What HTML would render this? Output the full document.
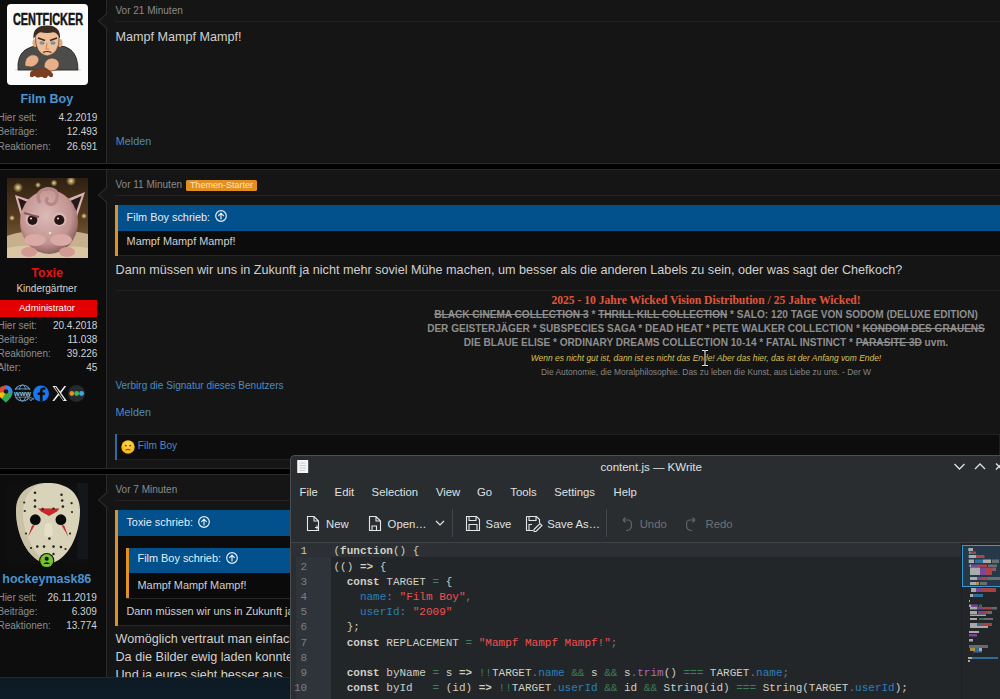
<!DOCTYPE html>
<html><head><meta charset="utf-8"><title>Forum + KWrite</title>
<style>
html,body{margin:0;padding:0;}
body{width:1000px;height:699px;overflow:hidden;position:relative;background:#000;font-family:"Liberation Sans", sans-serif;}
.t{position:absolute;white-space:nowrap;line-height:1;}
.r{position:absolute;}
s{text-decoration:line-through;}
</style></head><body>
<div class="r" style="left:0px;top:-5px;width:1000px;height:169px;background:#2a2a2a;"></div>
<div class="r" style="left:0px;top:-4px;width:106px;height:167px;background:#0d0d0d;"></div>
<div class="r" style="left:107px;top:-4px;width:893px;height:167px;background:#151515;"></div>
<svg class="r" style="left:97px;top:12px" width="12" height="18" viewBox="0 0 12 18"><path d="M10 0 L10 1.5 L1.5 9 L10 16.5 L10 18" fill="#151515" stroke="#2a2a2a" stroke-width="1.2"/><rect x="10" y="1.2" width="2" height="15.6" fill="#151515"/></svg>
<div class="r" style="left:0px;top:169px;width:1000px;height:300px;background:#2a2a2a;"></div>
<div class="r" style="left:0px;top:170px;width:106px;height:298px;background:#0d0d0d;"></div>
<div class="r" style="left:107px;top:170px;width:893px;height:298px;background:#151515;"></div>
<svg class="r" style="left:97px;top:186px" width="12" height="18" viewBox="0 0 12 18"><path d="M10 0 L10 1.5 L1.5 9 L10 16.5 L10 18" fill="#151515" stroke="#2a2a2a" stroke-width="1.2"/><rect x="10" y="1.2" width="2" height="15.6" fill="#151515"/></svg>
<div class="r" style="left:0px;top:474px;width:1000px;height:287px;background:#2a2a2a;"></div>
<div class="r" style="left:0px;top:475px;width:106px;height:285px;background:#0d0d0d;"></div>
<div class="r" style="left:107px;top:475px;width:893px;height:285px;background:#151515;"></div>
<svg class="r" style="left:97px;top:491px" width="12" height="18" viewBox="0 0 12 18"><path d="M10 0 L10 1.5 L1.5 9 L10 16.5 L10 18" fill="#151515" stroke="#2a2a2a" stroke-width="1.2"/><rect x="10" y="1.2" width="2" height="15.6" fill="#151515"/></svg>
<svg class="r" style="left:7px;top:4px" width="81" height="81" viewBox="0 0 81 81">
<rect width="81" height="81" rx="4" fill="#fcfcfc"/>
<text x="6" y="20.6" font-family="Liberation Sans" font-weight="700" font-size="16" textLength="70" lengthAdjust="spacingAndGlyphs" fill="#141414" stroke="#141414" stroke-width="0.5">CENTFICKER</text>
<path d="M8 66 H74" stroke="#d8d2c4" stroke-width="1.2"/>
<path d="M11 66 Q10 52 18 46 Q26 41 32 42 L50 42 Q58 41 64 46 Q71 52 71 66 Z" fill="#4c4c4a" stroke="#222" stroke-width="0.8"/>
<ellipse cx="28" cy="39" rx="2.5" ry="4" fill="#e3a97f"/>
<ellipse cx="53" cy="39" rx="2.5" ry="4" fill="#e3a97f"/>
<path d="M28.5 32 Q28 50 40 52 Q53 50 52 32 Q50 27 40 27 Q30 27 28.5 32 Z" fill="#efbf97" stroke="#3a2a20" stroke-width="0.6"/>
<path d="M26.5 35 Q25 21.5 40 21.5 Q54 21.5 53 35 Q51 29 47 28 Q40 30 33 28 Q29 30 26.5 35 Z" fill="#3b2b22"/>
<path d="M31 34 L38 36.5 M43 36.5 L50 34" stroke="#3a2a20" stroke-width="1.6"/>
<ellipse cx="35" cy="39" rx="2.6" ry="1.7" fill="#7e8fa2"/><ellipse cx="46" cy="39" rx="2.6" ry="1.7" fill="#7e8fa2"/>
<path d="M40 39 L39 45 L42 45" stroke="#b07050" stroke-width="0.7" fill="none"/>
<path d="M36 48.5 Q40 46.5 44.5 48.5" stroke="#5a2a1a" stroke-width="1.1" fill="none"/>
<path d="M18 62 Q17 54 24 51 Q31 50 32 56 Q30 62 24 63 Z" fill="#e8b088" stroke="#5a3a2a" stroke-width="0.6"/>
<path d="M37 63 Q37 55 45 54 Q53 55 52 62 Q50 67 43 67 Z" fill="#e8b088" stroke="#5a3a2a" stroke-width="0.6"/>
<g fill="#7a3f22"><ellipse cx="34" cy="69" rx="11" ry="4"/><circle cx="28" cy="68" r="2.6"/><circle cx="34" cy="65.5" r="2.6"/><circle cx="40" cy="68" r="2.6"/><circle cx="31" cy="71" r="2.6"/><circle cx="38" cy="71.5" r="2.6"/><circle cx="25" cy="71" r="2.2"/><circle cx="44" cy="71" r="2.2"/></g>
</svg>
<div class="t" style="top:92.92px;left:-3.20px;width:100px;text-align:center;font-size:12.5px;color:#4b93cf;font-weight:700;">Film Boy</div>
<div class="t" style="top:113.13px;left:-2.60px;font-size:10px;color:#8c8c8c;">Hier seit:</div>
<div class="t" style="top:113.13px;left:17.40px;width:80px;text-align:right;font-size:10px;color:#d2d2d2;">4.2.2019</div>
<div class="t" style="top:127.33px;left:-2.60px;font-size:10px;color:#8c8c8c;">Beiträge:</div>
<div class="t" style="top:127.33px;left:17.40px;width:80px;text-align:right;font-size:10px;color:#d2d2d2;">12.493</div>
<div class="t" style="top:141.53px;left:-2.60px;font-size:10px;color:#8c8c8c;">Reaktionen:</div>
<div class="t" style="top:141.53px;left:17.40px;width:80px;text-align:right;font-size:10px;color:#d2d2d2;">26.691</div>
<div class="t" style="top:5.94px;left:115.50px;font-size:10px;color:#8a8a8a;">Vor 21 Minuten</div>
<div class="r" style="left:115px;top:21px;width:885px;height:1px;background:#212121;"></div>
<div class="t" style="top:30.63px;left:115.50px;font-size:12.6px;color:#d0d0d0;">Mampf Mampf Mampf!</div>
<div class="t" style="top:136.46px;left:115.80px;font-size:10.8px;color:#4b8bc3;">Melden</div>
<svg class="r" style="left:7px;top:178px" width="81" height="80" viewBox="0 0 81 80">
<defs>
<linearGradient id="jbg" x1="0" y1="0" x2="0" y2="1"><stop offset="0" stop-color="#2e2012"/><stop offset="0.55" stop-color="#5c4022"/><stop offset="1" stop-color="#8a7050"/></linearGradient>
<radialGradient id="jbody" cx="0.45" cy="0.4" r="0.62"><stop offset="0" stop-color="#dcbab6"/><stop offset="0.7" stop-color="#c29492"/><stop offset="1" stop-color="#845c5a"/></radialGradient>
<radialGradient id="bok" cx="0.5" cy="0.5" r="0.5"><stop offset="0" stop-color="#f6dc90"/><stop offset="1" stop-color="#f6dc90" stop-opacity="0"/></radialGradient>
</defs>
<rect width="81" height="80" fill="url(#jbg)"/>
<circle cx="11" cy="9.5" r="5" fill="url(#bok)"/><circle cx="64" cy="3" r="5" fill="url(#bok)"/><circle cx="47" cy="5" r="3.5" fill="url(#bok)"/><circle cx="31" cy="7" r="3" fill="url(#bok)"/><circle cx="77" cy="38" r="3" fill="url(#bok)"/><circle cx="5" cy="40" r="3" fill="url(#bok)"/>
<path d="M0 58 Q20 50 40 58 Q62 50 81 56 V80 H0 Z" fill="#c8b08c"/>
<path d="M0 70 Q25 64 45 72 Q65 66 81 70 V80 H0 Z" fill="#dac6a4"/>
<path d="M8 17 L26 23 L15 42 Z" fill="#d7b0ac"/><path d="M11 20 L23 25 L16 37 Z" fill="#241818"/>
<path d="M78 14 L58 22 L69 42 Z" fill="#d7b0ac"/><path d="M74.5 18 L61 24 L68 37 Z" fill="#241818"/>
<ellipse cx="42" cy="44" rx="29" ry="32" fill="url(#jbody)"/>
<path d="M33 25 Q27 13 40 10.5 Q52 10 50 21 Q48 28 42 26 Q37 24 41 19.5" fill="none" stroke="#b58884" stroke-width="3.2"/>
<ellipse cx="25.5" cy="41.6" rx="7" ry="6.8" fill="#d9b8b4"/><circle cx="25.5" cy="42" r="4.9" fill="#251616"/><circle cx="24" cy="40.5" r="1" fill="#eee"/>
<ellipse cx="52.3" cy="41.6" rx="7.2" ry="7" fill="#d9b8b4"/><circle cx="52.3" cy="42" r="5.1" fill="#251616"/><circle cx="51" cy="40.5" r="1" fill="#eee"/>
<path d="M17 35 L32 39" stroke="#8a5a58" stroke-width="2"/>
<circle cx="43" cy="55" r="1.3" fill="#e9e0d0"/>
<ellipse cx="28" cy="62" rx="11" ry="6" fill="#d9aaa6"/><ellipse cx="54" cy="62" rx="11" ry="6" fill="#d9aaa6"/>
<ellipse cx="22" cy="74" rx="8" ry="5" fill="#d29a92"/><ellipse cx="60" cy="74" rx="8" ry="5" fill="#d29a92"/>
</svg>
<div class="t" style="top:267.32px;left:-2.80px;width:100px;text-align:center;font-size:12.5px;color:#e41414;font-weight:700;">Toxie</div>
<div class="t" style="top:283.84px;left:-3.30px;width:100px;text-align:center;font-size:10px;color:#d2d2d2;">Kindergärtner</div>
<div class="r" style="left:0px;top:300px;width:97.4px;height:17px;background:#e30000;"></div>
<div class="t" style="top:302.56px;left:-3.00px;width:100px;text-align:center;font-size:9.5px;color:#ffffff;">Administrator</div>
<div class="t" style="top:321.04px;left:-2.60px;font-size:10px;color:#8c8c8c;">Hier seit:</div>
<div class="t" style="top:321.04px;left:17.40px;width:80px;text-align:right;font-size:10px;color:#d2d2d2;">20.4.2018</div>
<div class="t" style="top:335.04px;left:-2.60px;font-size:10px;color:#8c8c8c;">Beiträge:</div>
<div class="t" style="top:335.04px;left:17.40px;width:80px;text-align:right;font-size:10px;color:#d2d2d2;">11.038</div>
<div class="t" style="top:349.04px;left:-2.60px;font-size:10px;color:#8c8c8c;">Reaktionen:</div>
<div class="t" style="top:349.04px;left:17.40px;width:80px;text-align:right;font-size:10px;color:#d2d2d2;">39.226</div>
<div class="t" style="top:363.04px;left:-2.60px;font-size:10px;color:#8c8c8c;">Alter:</div>
<div class="t" style="top:363.04px;left:17.40px;width:80px;text-align:right;font-size:10px;color:#d2d2d2;">45</div>
<svg class="r" style="left:0px;top:384px" width="90" height="19" viewBox="0 0 90 19">
<path d="M6 1.5 C1 1.5 -2 5 -2 8.5 C-2 12 2 15 6 18.5 C10 15 12.5 12 12.5 8.5 C12.5 5 10 1.5 6 1.5 Z" fill="#34a853"/>
<path d="M6 1.5 C2 1.5 -2 5 -2 8.5 L6 8.5 Z" fill="#ea4335"/>
<path d="M6 1.5 C10 1.5 12.5 5 12.5 8.5 L6 8.5 Z" fill="#4285f4"/>
<path d="M-2 8.5 C-2 11 0 13 2 14.5 L6 8.5 Z" fill="#fbbc04"/>
<circle cx="6" cy="7.5" r="2.3" fill="#1a1a1a"/>
<circle cx="22.5" cy="9" r="8" fill="none" stroke="#6e9ec4" stroke-width="1.2"/>
<ellipse cx="22.5" cy="9" rx="3.5" ry="8" fill="none" stroke="#6e9ec4" stroke-width="1"/>
<path d="M15 5 H30 M15 13 H30" stroke="#6e9ec4" stroke-width="1"/>
<rect x="13" y="5.8" width="19" height="6.6" fill="#0e0e0e"/>
<text x="22.5" y="12" font-family="Liberation Sans" font-weight="700" font-size="7.6" textLength="17" lengthAdjust="spacingAndGlyphs" fill="#8cbde0" text-anchor="middle">www</text>
<path d="M27 12 l4 5 l1 -2 l2 0 z" fill="#0e0e0e" stroke="#7aa0c0" stroke-width="0.8"/>
<circle cx="41" cy="9.5" r="8" fill="#1877f2"/>
<path d="M42.6 17.5 V11 H44.8 L45.2 8.5 H42.6 V7 C42.6 6.2 43 5.8 43.9 5.8 H45.3 V3.6 C44.8 3.5 44 3.4 43.3 3.4 C41.2 3.4 39.9 4.7 39.9 6.9 V8.5 H37.7 V11 H39.9 V17.5 Z" fill="#0e0e0e"/>
<path d="M52.5 2 L58 9.5 L52.3 17 H54.2 L59 10.9 L63.3 17 H67 L61.1 9 L66.3 2 H64.4 L60.2 7.6 L56.2 2 Z" fill="#eeeeee"/>
<path d="M55 3 L63.8 16" stroke="#0e0e0e" stroke-width="1.2"/>
<circle cx="76.5" cy="9.5" r="8.5" fill="#262a2e"/>
<circle cx="71.8" cy="9.5" r="2.4" fill="#f0892a"/><circle cx="76.7" cy="9.5" r="2.4" fill="#33c24a"/><circle cx="81.6" cy="9.5" r="2.4" fill="#3aa9e8"/>

</svg>
<div class="t" style="top:180.34px;left:115.50px;font-size:10px;color:#8a8a8a;">Vor 11 Minuten</div>
<div class="r" style="left:186px;top:180px;width:70.8px;height:11px;background:#e28f1e;border-radius:1.5px;"></div>
<div class="t" style="top:180.88px;left:171.40px;width:100px;text-align:center;font-size:9px;color:#fbe6bd;">Themen-Starter</div>
<div class="r" style="left:115px;top:195px;width:885px;height:1px;background:#212121;"></div>
<div class="r" style="left:115px;top:204.7px;width:885px;height:51.6px;background:#0c0c0c;border-bottom:1px solid #262626;box-sizing:border-box;"></div>
<div class="r" style="left:118px;top:204.7px;width:882px;height:26.1px;background:#02508c;"></div>
<div class="r" style="left:115px;top:204.7px;width:3px;height:51.3px;background:#df9026;"></div>
<div class="t" style="top:211.67px;left:126.60px;font-size:10.9px;color:#e6eef6;">Film Boy schrieb:</div>
<svg class="r" style="left:213.9px;top:209.4px" width="14" height="14" viewBox="0 0 14 14"><circle cx="7" cy="7" r="5.3" fill="none" stroke="#e8eef5" stroke-width="1.2"/><path d="M7 10 V4.3 M4.6 6.6 L7 4.2 L9.4 6.6" fill="none" stroke="#e8eef5" stroke-width="1.2" stroke-linecap="round" stroke-linejoin="round"/></svg>
<div class="t" style="top:236.27px;left:126.60px;font-size:10.9px;color:#d0d0d0;">Mampf Mampf Mampf!</div>
<div class="t" style="top:264.10px;left:115.60px;font-size:12.64px;color:#d0d0d0;">Dann müssen wir uns in Zukunft ja nicht mehr soviel Mühe machen, um besser als die anderen Labels zu sein, oder was sagt der Chefkoch?</div>
<div class="r" style="left:116px;top:290px;width:884px;height:1px;background:#212121;"></div>
<div class="t" style="top:295.09px;left:106.00px;width:1200px;text-align:center;font-size:11.6px;color:#e2553a;font-weight:700;font-family:'Liberation Serif', serif;">2025 - 10 Jahre Wicked Vision Distribution / 25 Jahre Wicked!</div>
<div class="t" style="top:309.85px;left:106.00px;width:1200px;text-align:center;font-size:10.1px;color:#8e8e8e;font-weight:700;"><s>BLACK CINEMA COLLECTION 3</s> * <s>THRILL KILL COLLECTION</s> * SALO: 120 TAGE VON SODOM (DELUXE EDITION)</div>
<div class="t" style="top:323.99px;left:106.00px;width:1200px;text-align:center;font-size:10.05px;color:#8e8e8e;font-weight:700;">DER GEISTERJÄGER * SUBSPECIES SAGA * DEAD HEAT * PETE WALKER COLLECTION * <s>KONDOM DES GRAUENS</s></div>
<div class="t" style="top:338.35px;left:106.00px;width:1200px;text-align:center;font-size:10.1px;color:#8e8e8e;font-weight:700;">DIE BLAUE ELISE * ORDINARY DREAMS COLLECTION 10-14 * FATAL INSTINCT * <s>PARASITE 3D</s> uvm.</div>
<div class="t" style="top:353.86px;left:106.00px;width:1200px;text-align:center;font-size:8.44px;color:#d9c25a;font-style:italic;">Wenn es nicht gut ist, dann ist es nicht das Ende! Aber das hier, das ist der Anfang vom Ende!</div>
<div class="t" style="top:368.36px;left:106.00px;width:1200px;text-align:center;font-size:8.44px;color:#858585;">Die Autonomie, die Moralphilosophie. Das zu leben die Kunst, aus Liebe zu uns. - Der W</div>
<svg class="r" style="left:700px;top:349px" width="10" height="18" viewBox="0 0 10 18"><path d="M2 1.5 H4 Q5 1.5 5 3 V15 Q5 16.5 4 16.5 H2 M8 1.5 H6 Q5 1.5 5 3 V15 Q5 16.5 6 16.5 H8" fill="none" stroke="#000" stroke-width="2.6"/><path d="M2 1.5 H4 Q5 1.5 5 3 V15 Q5 16.5 4 16.5 H2 M8 1.5 H6 Q5 1.5 5 3 V15 Q5 16.5 6 16.5 H8" fill="none" stroke="#eee" stroke-width="1.1"/></svg>
<div class="t" style="top:381.29px;left:115.40px;font-size:10.05px;color:#4b8bc3;">Verbirg die Signatur dieses Benutzers</div>
<div class="t" style="top:406.96px;left:115.60px;font-size:10.8px;color:#4b8bc3;">Melden</div>
<div class="r" style="left:115px;top:434.3px;width:885px;height:26px;background:#0d0d0d;border:1px solid #202020;box-sizing:border-box;"></div>
<div class="r" style="left:115px;top:434.3px;width:2px;height:26px;background:#336a9c;"></div>
<svg class="r" style="left:121px;top:440px" width="14" height="14" viewBox="0 0 14 14"><defs><radialGradient id="emo" cx="0.5" cy="0.35" r="0.65"><stop offset="0" stop-color="#ffd84a"/><stop offset="1" stop-color="#f5b012"/></radialGradient></defs><circle cx="7" cy="7" r="6.7" fill="url(#emo)"/><circle cx="4.8" cy="5.6" r="0.9" fill="#5a3a10"/><circle cx="9.2" cy="5.6" r="0.9" fill="#5a3a10"/><path d="M4.6 10 Q7 8.6 9.4 10" fill="none" stroke="#5a3a10" stroke-width="0.9"/></svg>
<div class="t" style="top:441.25px;left:137.80px;font-size:10.1px;color:#4b8bc3;">Film Boy</div>
<svg class="r" style="left:7px;top:483px" width="81" height="82" viewBox="0 0 81 82">
<rect width="81" height="81" fill="#0f0f0f"/>
<rect x="70.5" y="0" width="10.5" height="76" fill="#13161a"/>
<path d="M41 0 C58 0 73 8 73 28 C73 50 62 78 41 81 C20 78 9 50 9 28 C9 8 24 0 41 0 Z" fill="#d9d3b9"/>
<path d="M9 28 C9 50 20 78 41 81 C28 72 16 52 16 30 C16 14 24 4 34 1 C20 3 9 10 9 28 Z" fill="#bcb598" opacity="0.55"/>
<path d="M31 25.5 H52.5 L50 28.5 L42 33 L34 28.5 Z" fill="#c8282a"/>
<circle cx="28.3" cy="36.7" r="5.4" fill="#0b0b0b"/><circle cx="53.9" cy="36.7" r="5.4" fill="#0b0b0b"/>
<path d="M27.8 42 L25 42.5 L21 54 Z" fill="#c8282a"/><path d="M54.4 42 L57.2 42.5 L61.5 54 Z" fill="#c8282a"/>
<g fill="#2a2520">
<circle cx="28" cy="9.7" r="1.3"/><circle cx="54.5" cy="11.7" r="1.3"/><circle cx="28" cy="17.5" r="1.3"/><circle cx="55.2" cy="17.5" r="1.3"/><circle cx="28" cy="23.6" r="1.3"/><circle cx="55.9" cy="23.6" r="1.3"/><circle cx="35.7" cy="26" r="1.2"/><circle cx="46.5" cy="25.6" r="1.2"/>
<circle cx="17.2" cy="19.5" r="1.1"/><circle cx="64.6" cy="20.2" r="1.1"/><circle cx="17.8" cy="28" r="1.1"/><circle cx="65" cy="29" r="1.1"/>
<circle cx="19" cy="50.5" r="1.1"/><circle cx="63" cy="50.5" r="1.1"/><circle cx="42.4" cy="55.6" r="1.3"/>
<circle cx="30.3" cy="63.6" r="1.3"/><circle cx="37" cy="63.6" r="1.3"/><circle cx="46.5" cy="63.6" r="1.3"/><circle cx="53.9" cy="64" r="1.3"/>
<circle cx="24" cy="65" r="1.1"/><circle cx="58.5" cy="66" r="1.1"/><circle cx="46.5" cy="71" r="1.2"/>
</g>
<path d="M38 42 Q41.5 38 45 42 L46 52 Q41.5 56 37 52 Z" fill="#e8e2cc" opacity="0.8"/>
</svg>
<svg class="r" style="left:39px;top:552.5px" width="16" height="16" viewBox="0 0 16 16"><circle cx="7.7" cy="7.6" r="7.6" fill="#111"/><circle cx="7.7" cy="7.6" r="6.5" fill="#74c22e"/><circle cx="7.7" cy="5.7" r="2" fill="#111"/><path d="M4.2 11 Q7.7 7.4 11.2 11 Z" fill="#111"/></svg>
<div class="t" style="top:572.62px;left:-8.20px;width:110px;text-align:center;font-size:12.5px;color:#4b93cf;font-weight:700;">hockeymask86</div>
<div class="t" style="top:592.93px;left:-2.60px;font-size:10px;color:#8c8c8c;">Hier seit:</div>
<div class="t" style="top:592.93px;left:16.80px;width:80px;text-align:right;font-size:10px;color:#d2d2d2;">26.11.2019</div>
<div class="t" style="top:606.73px;left:-2.60px;font-size:10px;color:#8c8c8c;">Beiträge:</div>
<div class="t" style="top:606.73px;left:16.80px;width:80px;text-align:right;font-size:10px;color:#d2d2d2;">6.309</div>
<div class="t" style="top:620.53px;left:-2.60px;font-size:10px;color:#8c8c8c;">Reaktionen:</div>
<div class="t" style="top:620.53px;left:16.80px;width:80px;text-align:right;font-size:10px;color:#d2d2d2;">13.774</div>
<div class="t" style="top:485.34px;left:115.50px;font-size:10px;color:#8a8a8a;">Vor 7 Minuten</div>
<div class="r" style="left:115px;top:500px;width:885px;height:1px;background:#212121;"></div>
<div class="r" style="left:115px;top:510px;width:885px;height:116px;background:#0c0c0c;border-bottom:1px solid #262626;box-sizing:border-box;"></div>
<div class="r" style="left:118px;top:510px;width:882px;height:26px;background:#02508c;"></div>
<div class="r" style="left:115px;top:510px;width:3px;height:115.8px;background:#df9026;"></div>
<div class="t" style="top:516.57px;left:126.40px;font-size:10.9px;color:#e6eef6;">Toxie schrieb:</div>
<svg class="r" style="left:197.2px;top:514.7px" width="14" height="14" viewBox="0 0 14 14"><circle cx="7" cy="7" r="5.3" fill="none" stroke="#e8eef5" stroke-width="1.2"/><path d="M7 10 V4.3 M4.6 6.6 L7 4.2 L9.4 6.6" fill="none" stroke="#e8eef5" stroke-width="1.2" stroke-linecap="round" stroke-linejoin="round"/></svg>
<div class="r" style="left:126px;top:547.5px;width:874px;height:51.1px;background:#0a0a0a;border-bottom:1px solid #262626;box-sizing:border-box;"></div>
<div class="r" style="left:129px;top:547.5px;width:871px;height:25px;background:#02508c;"></div>
<div class="r" style="left:126px;top:547.5px;width:3px;height:50.6px;background:#df9026;"></div>
<div class="t" style="top:553.37px;left:137.50px;font-size:10.9px;color:#e6eef6;">Film Boy schrieb:</div>
<svg class="r" style="left:224.8px;top:551.2px" width="14" height="14" viewBox="0 0 14 14"><circle cx="7" cy="7" r="5.3" fill="none" stroke="#e8eef5" stroke-width="1.2"/><path d="M7 10 V4.3 M4.6 6.6 L7 4.2 L9.4 6.6" fill="none" stroke="#e8eef5" stroke-width="1.2" stroke-linecap="round" stroke-linejoin="round"/></svg>
<div class="t" style="top:579.87px;left:137.50px;font-size:10.9px;color:#d0d0d0;">Mampf Mampf Mampf!</div>
<div class="t" style="top:605.77px;left:126.40px;font-size:10.9px;color:#d0d0d0;">Dann müssen wir uns in Zukunft ja nicht mehr soviel Mühe machen</div>
<div class="t" style="top:633.40px;left:115.50px;font-size:12.64px;color:#d0d0d0;">Womöglich vertraut man einfach dem Code</div>
<div class="t" style="top:651.40px;left:115.50px;font-size:12.64px;color:#d0d0d0;">Da die Bilder ewig laden konnten</div>
<div class="t" style="top:669.40px;left:115.50px;font-size:12.64px;color:#d0d0d0;">Und ja eures sieht besser aus.</div>
<div class="r" style="left:0;top:677px;width:1000px;height:22px;background:linear-gradient(180deg,#0b1a23,#0e1c27);border-top:1px solid #29272f;box-sizing:border-box;"></div>
<div class="r" style="left:290px;top:455px;width:720px;height:260px;background:#2a2d2f;border-top-left-radius:5px;border-left:1px solid #4b4e51;border-top:1px solid #4b4e51;box-sizing:border-box;"></div>
<svg class="r" style="left:297px;top:460px" width="12" height="14" viewBox="0 0 12 14"><rect x="0.2" y="0" width="11" height="13" fill="#f4f4f4"/><path d="M2.5 3 H8.5 M2.5 5.5 H9 M2.5 8 H9 M2.5 10.5 H8" stroke="#c4c4c4" stroke-width="0.8"/></svg>
<div class="t" style="top:462.07px;left:551.20px;width:200px;text-align:center;font-size:11.5px;color:#dfe1e3;">content.js — KWrite</div>
<svg class="r" style="left:950px;top:459px" width="50" height="14" viewBox="0 0 50 14"><path d="M4.5 5 L9.5 10 L14.5 5" fill="none" stroke="#dfe1e3" stroke-width="1.3"/><path d="M25 10 L30 5 L35 10" fill="none" stroke="#dfe1e3" stroke-width="1.3"/><path d="M46 4.5 L52 10.5 M52 4.5 L46 10.5" fill="none" stroke="#dfe1e3" stroke-width="1.3"/></svg>
<div class="t" style="top:486.83px;left:299.60px;font-size:11.3px;color:#dfe1e3;">File</div>
<div class="t" style="top:486.83px;left:334.60px;font-size:11.3px;color:#dfe1e3;">Edit</div>
<div class="t" style="top:486.83px;left:371.60px;font-size:11.3px;color:#dfe1e3;">Selection</div>
<div class="t" style="top:486.83px;left:436.00px;font-size:11.3px;color:#dfe1e3;">View</div>
<div class="t" style="top:486.83px;left:477.00px;font-size:11.3px;color:#dfe1e3;">Go</div>
<div class="t" style="top:486.83px;left:510.30px;font-size:11.3px;color:#dfe1e3;">Tools</div>
<div class="t" style="top:486.83px;left:554.20px;font-size:11.3px;color:#dfe1e3;">Settings</div>
<div class="t" style="top:486.83px;left:613.60px;font-size:11.3px;color:#dfe1e3;">Help</div>
<div class="t" style="top:519.23px;left:326.00px;font-size:11.3px;color:#dfe1e3;">New</div>
<div class="t" style="top:519.23px;left:387.60px;font-size:11.3px;color:#dfe1e3;">Open…</div>
<div class="t" style="top:519.23px;left:485.60px;font-size:11.3px;color:#dfe1e3;">Save</div>
<div class="t" style="top:519.23px;left:547.20px;font-size:11.3px;color:#dfe1e3;">Save As…</div>
<div class="t" style="top:519.23px;left:639.70px;font-size:11.3px;color:#6f7276;">Undo</div>
<div class="t" style="top:519.23px;left:705.50px;font-size:11.3px;color:#6f7276;">Redo</div>
<svg class="r" style="left:300px;top:508px" width="450" height="32" viewBox="0 0 450 32">
<g fill="none" stroke="#e4e6e8" stroke-width="1.1">
<path d="M7.5 8.5 H14 L18.5 13 V22.5 H7.5 Z M14 8.5 V13 H18.5"/>
<path d="M15 19.5 H19 M17 17.5 V21.5"/>
<path d="M69.5 8.5 H76 L80.5 13 V22.5 H69.5 Z M76 8.5 V13 H80.5"/>
<path d="M72 18 H76.5 V22.5 H72 Z"/>
<path d="M136 13 L140 17 L144 13" stroke-width="1.2"/>
<path d="M166.5 8.5 H176.5 L179.5 11.5 V22.5 H166.5 Z M169 8.5 V12.5 H176 V8.5 M169 22.5 V16.5 H177 V22.5"/>
<path d="M226.5 8.5 H236.5 L239.5 11.5 V15 M226.5 8.5 V22.5 H233 M229 8.5 V12.5 H236 V8.5 M229 22.5 V16.5 H232"/>
<path d="M234 21.5 L240 15.5 L242 17.5 L236 23.5 H234 Z"/>
</g>
<g fill="none" stroke="#62666a" stroke-width="1.1">
<path d="M323 12 H328 Q331.5 12 331.5 17 Q331.5 22.5 326 22.5 M323 12 L325.5 9.5 M323 12 L325.5 14.5"/>
<path d="M395 12 H390 Q386.5 12 386.5 17 Q386.5 22.5 392 22.5 M395 12 L392.5 9.5 M395 12 L392.5 14.5"/>
</g>
<path d="M152.5 1 V29 M306.5 1 V29" stroke="#44474b" stroke-width="1"/>
</svg>
<div class="r" style="left:291px;top:541.8px;width:709px;height:1px;background:#3f4246;"></div>
<div class="r" style="left:291px;top:543px;width:709px;height:156px;background:#232629;"></div>
<div class="r" style="left:291px;top:543px;width:40px;height:156px;background:#2b2e31;"></div>
<div class="r" style="left:296px;top:556.5px;width:35px;height:143px;background:#2f343a;"></div>
<div class="r" style="left:291px;top:543px;width:671px;height:13.5px;background:#2c2f33;"></div>
<div class="t" style="top:546.37px;left:277.20px;width:30px;text-align:right;font-size:11px;color:#c4c6c8;font-family:'Liberation Mono', monospace;">1</div>
<div class="t" style="top:561.57px;left:277.20px;width:30px;text-align:right;font-size:11px;color:#7b7f84;font-family:'Liberation Mono', monospace;">2</div>
<div class="t" style="top:576.77px;left:277.20px;width:30px;text-align:right;font-size:11px;color:#7b7f84;font-family:'Liberation Mono', monospace;">3</div>
<div class="t" style="top:591.97px;left:277.20px;width:30px;text-align:right;font-size:11px;color:#7b7f84;font-family:'Liberation Mono', monospace;">4</div>
<div class="t" style="top:607.17px;left:277.20px;width:30px;text-align:right;font-size:11px;color:#7b7f84;font-family:'Liberation Mono', monospace;">5</div>
<div class="t" style="top:622.37px;left:277.20px;width:30px;text-align:right;font-size:11px;color:#7b7f84;font-family:'Liberation Mono', monospace;">6</div>
<div class="t" style="top:637.57px;left:277.20px;width:30px;text-align:right;font-size:11px;color:#7b7f84;font-family:'Liberation Mono', monospace;">7</div>
<div class="t" style="top:652.77px;left:277.20px;width:30px;text-align:right;font-size:11px;color:#7b7f84;font-family:'Liberation Mono', monospace;">8</div>
<div class="t" style="top:667.97px;left:277.20px;width:30px;text-align:right;font-size:11px;color:#7b7f84;font-family:'Liberation Mono', monospace;">9</div>
<div class="t" style="top:683.17px;left:277.20px;width:30px;text-align:right;font-size:11px;color:#7b7f84;font-family:'Liberation Mono', monospace;">10</div>
<div class="t" style="top:546.37px;left:333.50px;font-size:11px;color:#cfcfc2;font-family:'Liberation Mono', monospace;white-space:pre;"><span style="color:#cfcfc2;">(</span><span style="color:#cfcfc2;font-weight:700;">function</span><span style="color:#cfcfc2;">() {</span></div>
<div class="t" style="top:561.57px;left:333.50px;font-size:11px;color:#cfcfc2;font-family:'Liberation Mono', monospace;white-space:pre;"><span style="color:#cfcfc2;">(() </span><span style="color:#cfcfc2;font-weight:700;">=&gt;</span><span style="color:#cfcfc2;"> {</span></div>
<div class="t" style="top:576.77px;left:333.50px;font-size:11px;color:#cfcfc2;font-family:'Liberation Mono', monospace;white-space:pre;"><span style="color:#cfcfc2;">  </span><span style="color:#cfcfc2;font-weight:700;">const</span><span style="color:#cfcfc2;"> TARGET </span><span style="color:#3f8058;">=</span><span style="color:#cfcfc2;"> {</span></div>
<div class="t" style="top:591.97px;left:333.50px;font-size:11px;color:#cfcfc2;font-family:'Liberation Mono', monospace;white-space:pre;"><span style="color:#cfcfc2;">    </span><span style="color:#2980b9;">name</span><span style="color:#7a7c7d;">:</span><span style="color:#cfcfc2;"> </span><span style="color:#f44f4f;">"Film Boy"</span><span style="color:#7a7c7d;">,</span></div>
<div class="t" style="top:607.17px;left:333.50px;font-size:11px;color:#cfcfc2;font-family:'Liberation Mono', monospace;white-space:pre;"><span style="color:#cfcfc2;">    </span><span style="color:#2980b9;">userId</span><span style="color:#7a7c7d;">:</span><span style="color:#cfcfc2;"> </span><span style="color:#f44f4f;">"2009"</span></div>
<div class="t" style="top:622.37px;left:333.50px;font-size:11px;color:#cfcfc2;font-family:'Liberation Mono', monospace;white-space:pre;"><span style="color:#cfcfc2;">  };</span></div>
<div class="t" style="top:637.57px;left:333.50px;font-size:11px;color:#cfcfc2;font-family:'Liberation Mono', monospace;white-space:pre;"><span style="color:#cfcfc2;">  </span><span style="color:#cfcfc2;font-weight:700;">const</span><span style="color:#cfcfc2;"> REPLACEMENT </span><span style="color:#3f8058;">=</span><span style="color:#cfcfc2;"> </span><span style="color:#f44f4f;">"Mampf Mampf Mampf!"</span><span style="color:#7a7c7d;">;</span></div>
<div class="t" style="top:667.97px;left:333.50px;font-size:11px;color:#cfcfc2;font-family:'Liberation Mono', monospace;white-space:pre;"><span style="color:#cfcfc2;">  </span><span style="color:#cfcfc2;font-weight:700;">const</span><span style="color:#cfcfc2;"> byName </span><span style="color:#3f8058;">=</span><span style="color:#cfcfc2;"> s </span><span style="color:#cfcfc2;font-weight:700;">=&gt;</span><span style="color:#cfcfc2;"> </span><span style="color:#3f8058;">!!</span><span style="color:#cfcfc2;">TARGET</span><span style="color:#7a7c7d;">.</span><span style="color:#2980b9;">name</span><span style="color:#cfcfc2;"> </span><span style="color:#3f8058;">&amp;&amp;</span><span style="color:#cfcfc2;"> s </span><span style="color:#3f8058;">&amp;&amp;</span><span style="color:#cfcfc2;"> s</span><span style="color:#7a7c7d;">.</span><span style="color:#a36ac7;">trim</span><span style="color:#cfcfc2;">() </span><span style="color:#3f8058;">===</span><span style="color:#cfcfc2;"> TARGET</span><span style="color:#7a7c7d;">.</span><span style="color:#2980b9;">name</span><span style="color:#7a7c7d;">;</span></div>
<div class="t" style="top:683.17px;left:333.50px;font-size:11px;color:#cfcfc2;font-family:'Liberation Mono', monospace;white-space:pre;"><span style="color:#cfcfc2;">  </span><span style="color:#cfcfc2;font-weight:700;">const</span><span style="color:#cfcfc2;"> byId   </span><span style="color:#3f8058;">=</span><span style="color:#cfcfc2;"> (id) </span><span style="color:#cfcfc2;font-weight:700;">=&gt;</span><span style="color:#cfcfc2;"> </span><span style="color:#3f8058;">!!</span><span style="color:#cfcfc2;">TARGET</span><span style="color:#7a7c7d;">.</span><span style="color:#2980b9;">userId</span><span style="color:#cfcfc2;"> </span><span style="color:#3f8058;">&amp;&amp;</span><span style="color:#cfcfc2;"> id </span><span style="color:#3f8058;">&amp;&amp;</span><span style="color:#cfcfc2;"> String(id) </span><span style="color:#3f8058;">===</span><span style="color:#cfcfc2;"> String(TARGET</span><span style="color:#7a7c7d;">.</span><span style="color:#2980b9;">userId</span><span style="color:#cfcfc2;">);</span></div>
<div class="r" style="left:961px;top:543px;width:39px;height:156px;background:#232629;border-left:1px solid #1d1f22;"></div>
<div class="r" style="left:962px;top:545px;width:40px;height:42px;background:#26394a;border:1px solid #3c97cc;box-sizing:border-box;"></div>
<svg class="r" style="left:962px;top:540px" width="38" height="130" viewBox="962 540 38 130"><rect x="968.3" y="548" width="4.7" height="3.0" fill="#c9cbc4" opacity="0.8"/><rect x="969.2" y="551.5" width="1.3" height="2.5" fill="#c9cbc4" opacity="0.8"/><rect x="970.5" y="551.5" width="1.5" height="2.5" fill="#2f7fb3" opacity="0.8"/><rect x="972" y="551.5" width="4.0" height="2.5" fill="#c94a48" opacity="0.8"/><rect x="968.7" y="555" width="7.3" height="3.0" fill="#c9cbc4" opacity="0.8"/><rect x="976" y="555" width="8.5" height="3.0" fill="#c94a48" opacity="0.8"/><rect x="968.7" y="559.5" width="5.3" height="3.5" fill="#c9cbc4" opacity="0.8"/><rect x="975" y="559.5" width="8.0" height="3.5" fill="#2f7fb3" opacity="0.8"/><rect x="983" y="559.5" width="8.0" height="3.5" fill="#c9cbc4" opacity="0.8"/><rect x="992" y="559.5" width="7.0" height="3.5" fill="#7a7c7d" opacity="0.8"/><rect x="969.5" y="564.5" width="1.5" height="2.5" fill="#c9cbc4" opacity="0.8"/><rect x="971" y="564.5" width="7.0" height="2.5" fill="#8a4fb0" opacity="0.8"/><rect x="978" y="564.5" width="9.0" height="2.5" fill="#c94a48" opacity="0.8"/><rect x="988" y="564.5" width="9.0" height="2.5" fill="#7a7c7d" opacity="0.8"/><rect x="970" y="567.5" width="10.0" height="3.5" fill="#c9cbc4" opacity="0.8"/><rect x="980" y="567.5" width="5.0" height="3.5" fill="#8a4fb0" opacity="0.8"/><rect x="985" y="567.5" width="8.0" height="3.5" fill="#c94a48" opacity="0.8"/><rect x="993" y="567.5" width="3.0" height="3.5" fill="#7a7c7d" opacity="0.8"/><rect x="970" y="571" width="10.0" height="4.0" fill="#c9cbc4" opacity="0.8"/><rect x="980" y="571" width="6.0" height="4.0" fill="#8a4fb0" opacity="0.8"/><rect x="986" y="571" width="6.0" height="4.0" fill="#c94a48" opacity="0.8"/><rect x="970" y="577" width="7.0" height="3.0" fill="#c9cbc4" opacity="0.8"/><rect x="977" y="577" width="5.0" height="3.0" fill="#8a4fb0" opacity="0.8"/><rect x="982" y="577" width="6.0" height="3.0" fill="#c94a48" opacity="0.8"/><rect x="988" y="577" width="12.0" height="3.0" fill="#7a7c7d" opacity="0.8"/><rect x="970" y="582" width="6.0" height="3.0" fill="#c9cbc4" opacity="0.8"/><rect x="976" y="582" width="3.0" height="3.0" fill="#c8a850" opacity="0.8"/><rect x="980" y="582" width="7.0" height="3.0" fill="#7a7c7d" opacity="0.8"/><rect x="971" y="588" width="5.0" height="4.0" fill="#c9cbc4" opacity="0.8"/><rect x="976" y="588" width="5.0" height="4.0" fill="#8a4fb0" opacity="0.8"/><rect x="981" y="588" width="15.0" height="4.0" fill="#c94a48" opacity="0.8"/><rect x="970" y="594" width="3.0" height="3.0" fill="#c9cbc4" opacity="0.8"/><rect x="973" y="594" width="10.0" height="3.0" fill="#2f7fb3" opacity="0.8"/><rect x="969" y="600" width="1.0" height="2.0" fill="#c9cbc4" opacity="0.8"/><rect x="969" y="604.5" width="2.5" height="2.5" fill="#c9cbc4" opacity="0.8"/><rect x="972" y="604.5" width="6.0" height="2.5" fill="#8a4fb0" opacity="0.8"/><rect x="979" y="604.5" width="3.0" height="2.5" fill="#3f8058" opacity="0.8"/><rect x="970" y="607" width="7.0" height="2.5" fill="#c9cbc4" opacity="0.8"/><rect x="977" y="607" width="6.0" height="2.5" fill="#8a4fb0" opacity="0.8"/><rect x="983" y="607" width="9.0" height="2.5" fill="#c94a48" opacity="0.8"/><rect x="992" y="607" width="5.0" height="2.5" fill="#7a7c7d" opacity="0.8"/><rect x="970" y="611" width="7.0" height="3.0" fill="#c9cbc4" opacity="0.8"/><rect x="978" y="611" width="5.0" height="3.0" fill="#8a4fb0" opacity="0.8"/><rect x="983" y="611" width="5.0" height="3.0" fill="#c94a48" opacity="0.8"/><rect x="988" y="611" width="4.0" height="3.0" fill="#7a7c7d" opacity="0.8"/><rect x="970" y="614.5" width="16.0" height="1.5" fill="#c9cbc4" opacity="0.8"/><rect x="970" y="618" width="7.0" height="2.0" fill="#c9cbc4" opacity="0.8"/><rect x="979" y="618" width="5.0" height="2.0" fill="#3f8058" opacity="0.8"/><rect x="984" y="618" width="9.0" height="2.0" fill="#7a7c7d" opacity="0.8"/><rect x="970" y="623" width="7.0" height="3.0" fill="#c9cbc4" opacity="0.8"/><rect x="977" y="623" width="4.0" height="3.0" fill="#2f7fb3" opacity="0.8"/><rect x="981" y="623" width="11.0" height="3.0" fill="#c94a48" opacity="0.8"/><rect x="970" y="626" width="18.0" height="2.0" fill="#c9cbc4" opacity="0.8"/><rect x="969" y="631" width="10.0" height="2.0" fill="#c9cbc4" opacity="0.8"/><rect x="969" y="634" width="8.0" height="2.5" fill="#8a4fb0" opacity="0.8"/><rect x="969" y="639" width="4.0" height="2.5" fill="#c9cbc4" opacity="0.8"/><rect x="969" y="645" width="19.0" height="3.0" fill="#7a7c7d" opacity="0.8"/><rect x="970" y="648" width="5.0" height="3.0" fill="#c8a850" opacity="0.8"/><rect x="975" y="648" width="4.0" height="3.0" fill="#2f7fb3" opacity="0.8"/><rect x="979" y="648" width="3.0" height="3.0" fill="#c9cbc4" opacity="0.8"/><rect x="973" y="651" width="9.0" height="1.5" fill="#2f7fb3" opacity="0.8"/><rect x="968" y="657" width="4.0" height="2.0" fill="#c9cbc4" opacity="0.8"/><rect x="972" y="657" width="26.0" height="2.0" fill="#2f7fb3" opacity="0.8"/><rect x="968" y="660" width="2.0" height="2.0" fill="#c9cbc4" opacity="0.8"/></svg>
</body></html>
